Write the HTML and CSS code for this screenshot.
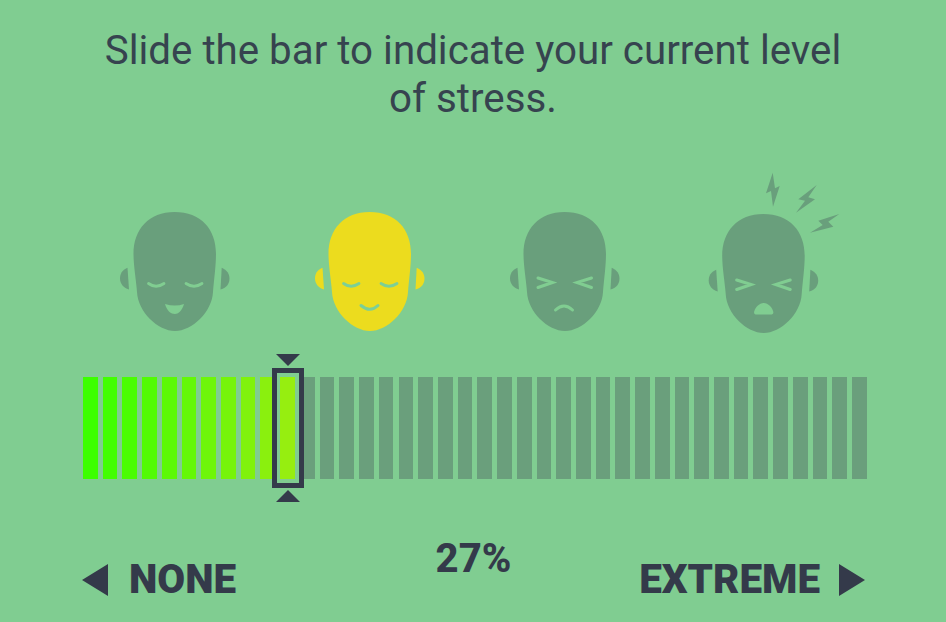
FILE: index.html
```html
<!DOCTYPE html>
<html lang="en">
<head>
    <meta charset="UTF-8">
    <meta name="viewport" content="width=device-width, initial-scale=1.0">
    <title>Stress level</title>
    <link rel="stylesheet" href="styles.css">
</head>
<body>

    <h1>Slide the bar to indicate your current level of stress.</h1>

    <svg class="defs">
        <defs>
            <g id="head">
                <path d="M64.5 42C91 42 106 59 106 84C106 95 104 110 103 122C102 142 82 161 65 161C48 161 28 142 27 122C26 110 23.5 95 23.5 84C23.5 59 39 42 64.5 42Z"/>
                <path d="M17.5 97.7C12 100 10 104 10 108.5C10 113 13 118 19 119.5Z"/>
                <path d="M111.7 97.7C117 100 119.5 104 119.5 108.5C119.5 113 117 118 110.5 119.5Z"/>
            </g>
        </defs>
    </svg>

    <div class="faces">
        <!-- none -->
        <svg class="face" viewBox="0 0 130 170">
            <use class="skin" href="#head"/>
            <path class="line" d="M38.5 113.5Q46 119 54 113.5M76 113.5Q84 119 92 113.5"/>
            <path class="cut" d="M55 134Q65 137 74 134C72 141 68 144 65 144C61 144 57 141 55 134Z"/>
        </svg>
        <!-- mild, current -->
        <svg class="face active" viewBox="0 0 130 170">
            <use class="skin" href="#head"/>
            <path class="line" d="M38.5 113.5Q46 119 54 113.5M76 113.5Q84 119 92 113.5"/>
            <path class="line thick" d="M56 135.5Q65 143 73 135.5"/>
        </svg>
        <!-- high -->
        <svg class="face" viewBox="0 0 130 170">
            <use class="skin" href="#head"/>
            <path class="line thick" d="M38 108L52.5 112.5L38 117.5M91.5 108L77 112.5L91.5 117.5"/>
            <path class="line thick" d="M55.5 140Q64 132 72.5 140"/>
        </svg>
        <!-- extreme -->
        <svg class="face" viewBox="0 0 130 170">
            <g transform="translate(3.7 2)">
                <use class="skin" href="#head"/>
                <path class="line thick" d="M38 108L52.5 112.5L38 117.5M91.5 108L77 112.5L91.5 117.5"/>
                <path class="cut" d="M55.5 139.5C56.5 135.5 60.5 131 65 131C69.5 131 73.5 135.5 74.5 139.5C75 141.5 74 142.5 72 142.5H58C56 142.5 55 141.5 55.5 139.5Z"/>
            </g>
            <path class="skin" d="M77.7 2.7L71 23.3L76 21L78 36.7L84.7 16L80 18.3Z"/>
            <path class="skin" d="M121.7 15L103.3 29.3L110 30.7L101 42.7L120 29.3L113.3 27.3Z"/>
            <path class="skin" d="M144.3 44L123.3 50.7L127.7 55L115 62.7L138.3 56.7L133.3 51.7Z"/>
        </svg>
    </div>

    <div class="slider">
        <div class="bars">
            <span></span><span></span><span></span><span></span><span></span>
            <span></span><span></span><span></span><span></span><span></span>
            <span></span><span></span><span></span><span></span><span></span>
            <span></span><span></span><span></span><span></span><span></span>
            <span></span><span></span><span></span><span></span><span></span>
            <span></span><span></span><span></span><span></span><span></span>
            <span></span><span></span><span></span><span></span><span></span>
            <span></span><span></span><span></span><span></span><span></span>
        </div>
        <div class="handle"></div>
    </div>

    <div class="scale">
        <div class="end"><i class="arrow left"></i>NONE</div>
        <div class="value">27%</div>
        <div class="end right-end">EXTREME<i class="arrow right"></i></div>
    </div>

</body>
</html>
```

FILE: styles.css
```css
body {
    margin: 0;
    height: 622px;
    overflow: hidden;
    background-color: #80cd91;
    color: #343a4a;
    font-family: Roboto, "Liberation Sans", sans-serif;
}
h1 {
    margin: 0 auto;
    padding-top: 27px;
    width: 760px;
    color: #36434f;
    font-size: 40.3px;
    font-weight: 400;
    line-height: 48px;
    text-align: center;
}
.defs {
    display: block;
    width: 0;
    height: 0;
}
.faces {
    display: flex;
    gap: 65px;
    margin-top: 47px;
    padding-left: 110px;
}
.face {
    flex: none;
    width: 130px;
    height: 170px;
    overflow: visible;
}
.skin {
    fill: #699f7c;
}
.cut {
    fill: #80cd91;
}
.line {
    fill: none;
    stroke: #80cd91;
    stroke-width: 2.8;
    stroke-linecap: round;
}
.line.thick {
    stroke-width: 3;
}
.active .skin {
    fill: #ecdc1e;
}
.active .line {
    stroke: #7ccf96;
}
.slider {
    position: relative;
    margin: 37px 79px 0 83px;
}
.bars {
    display: flex;
    justify-content: space-between;
    height: 102px;
}
.bars span {
    width: 14.7px;
    background-color: #6a9f7c;
}
.bars span:nth-child(1) { background-color: #3cff00; }
.bars span:nth-child(2) { background-color: #42fe02; }
.bars span:nth-child(3) { background-color: #4afd03; }
.bars span:nth-child(4) { background-color: #52fb05; }
.bars span:nth-child(5) { background-color: #5cf906; }
.bars span:nth-child(6) { background-color: #64f807; }
.bars span:nth-child(7) { background-color: #6ef609; }
.bars span:nth-child(8) { background-color: #76f40a; }
.bars span:nth-child(9) { background-color: #80f20c; }
.bars span:nth-child(10) { background-color: #8af00e; }
.bars span:nth-child(11) { background-color: #96ee10; }
.handle {
    position: absolute;
    left: 189px;
    top: -9px;
    width: 22px;
    height: 110px;
    border: 5px solid #343a4a;
}
.handle::before,
.handle::after {
    content: "";
    position: absolute;
    left: -1px;
    border-left: 12px solid transparent;
    border-right: 12px solid transparent;
}
.handle::before {
    top: -19px;
    border-top: 12px solid #343a4a;
}
.handle::after {
    bottom: -19px;
    border-bottom: 12px solid #343a4a;
}
.scale {
    display: grid;
    grid-template-columns: 1fr auto 1fr;
    align-items: center;
    margin: 0 81px 0 82px;
    padding-top: 78px;
}
.end {
    display: flex;
    align-items: center;
    gap: 21px;
    font-size: 40.4px;
    font-weight: 900;
    line-height: 46px;
}
.right-end {
    justify-content: flex-end;
    gap: 19px;
}
.value {
    margin-top: -42px;
    font-size: 40px;
    font-weight: 800;
    line-height: 42px;
}
.arrow {
    width: 0;
    height: 0;
    border-top: 16.5px solid transparent;
    border-bottom: 16.5px solid transparent;
}
.arrow.left {
    border-right: 26px solid #343a4a;
}
.arrow.right {
    border-left: 26px solid #343a4a;
}
```
